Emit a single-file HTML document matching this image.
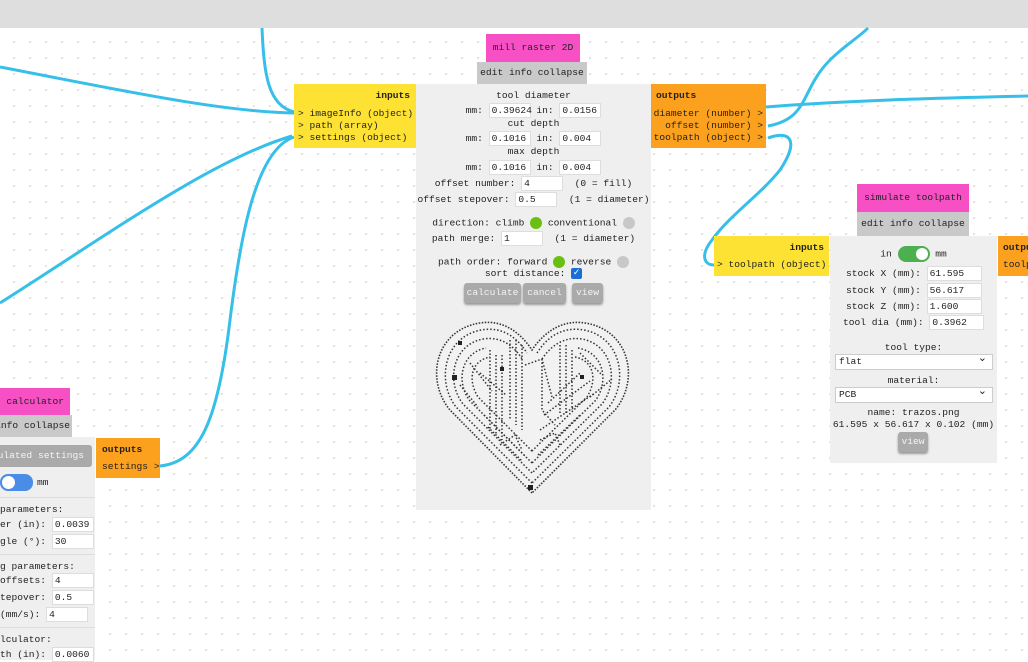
<!DOCTYPE html>
<html><head><meta charset="utf-8"><style>
*{box-sizing:border-box;margin:0;padding:0}
body{width:1028px;height:660px;overflow:hidden;position:relative;background:#fff;font-family:"Liberation Mono",monospace;font-size:9.6px;color:#222;
background-image:radial-gradient(circle,#d4d4d4 0.7px,transparent 1.1px);background-size:16px 16px;background-position:6px 2px}
.a{position:absolute}
.top{left:0;top:0;width:1028px;height:28px;background:#dedede}
.pink{background:#f650c4;text-align:center;white-space:nowrap}
.gray{background:#c9c9c9;text-align:center;white-space:nowrap;overflow:hidden}
.panel{background:#efefef}
.yel{background:#fde234}
.org{background:#fba11d}
.c{position:absolute;text-align:center;white-space:nowrap}
.in{display:inline-block;background:#fff;border:1px solid #ddd;height:15px;line-height:13px;text-align:left;padding-left:2px;vertical-align:middle}
.btn{position:absolute;background:#aaa;color:#f4f4f4;text-align:center;border-radius:3px;line-height:20px;box-shadow:0 2px 2px #999;white-space:nowrap}
.dot{display:inline-block;width:12px;height:12px;border-radius:6px;vertical-align:middle}
.sel{position:absolute;background:#fff;border:1px solid #ccc;height:16px;line-height:14px;padding-left:3px}
.sel:after{content:"⌄";position:absolute;right:5px;top:-3px;font-size:11px}
b{font-weight:bold}
</style></head><body>
<div class="a top"></div>
<svg class="a" style="left:0;top:0" width="1028" height="660">
<g fill="none" stroke="#35bfe9" stroke-width="3">
<path d="M262,28 C264,75 268,105 294,112"/>
<path d="M0,67 C110,88 220,112 294,113"/>
<path d="M0,303 C100,240 210,160 292,136"/>
<path d="M294,137 C255,150 240,240 230,320 C218,420 200,462 160,466"/>
<path d="M766,107 C850,100 950,98 1028,96"/>
<path d="M768,126 C810,118 800,90 830,60 C845,45 858,38 868,28"/>
<path d="M768,138 C790,130 800,140 780,170 C760,195 730,215 712,240 C700,255 704,265 714,265"/>
</g></svg>

<div class="a pink" style="left:486px;top:34px;width:94px;height:28px;line-height:28px">mill raster 2D</div>
<div class="a gray" style="left:477px;top:62px;width:110px;height:22px;line-height:22px">edit info collapse</div>
<div class="a panel" style="left:416px;top:84px;width:235px;height:426px"></div>
<div class="a yel" style="left:294px;top:84px;width:122px;height:64px">
<div class="c" style="right:6px;top:6px"><b>inputs</b></div>
<div class="a" style="left:4px;top:24px;line-height:12px;white-space:pre">&gt; imageInfo (object)
&gt; path (array)
&gt; settings (object)</div></div>
<div class="a org" style="left:651px;top:84px;width:115px;height:64px">
<div class="a" style="left:5px;top:6px"><b>outputs</b></div>
<div class="a" style="right:3px;top:24px;line-height:12px;white-space:pre;text-align:right">diameter (number) &gt;
offset (number) &gt;
toolpath (object) &gt;</div></div>

<div class="c" style="left:416px;width:235px;top:90px">tool diameter</div>
<div class="c" style="left:416px;width:235px;top:103px">mm: <span class="in" style="width:42px">0.39624</span> in: <span class="in" style="width:42px">0.0156</span></div>
<div class="c" style="left:416px;width:235px;top:118px">cut depth</div>
<div class="c" style="left:416px;width:235px;top:131px">mm: <span class="in" style="width:42px">0.1016</span> in: <span class="in" style="width:42px">0.004</span></div>
<div class="c" style="left:416px;width:235px;top:146px">max depth</div>
<div class="c" style="left:416px;width:235px;top:160px">mm: <span class="in" style="width:42px">0.1016</span> in: <span class="in" style="width:42px">0.004</span></div>
<div class="c" style="left:416px;width:235px;top:176px">offset number: <span class="in" style="width:42px">4</span> &nbsp;(0 = fill)</div>
<div class="c" style="left:416px;width:235px;top:192px">offset stepover: <span class="in" style="width:42px">0.5</span> &nbsp;(1 = diameter)</div>
<div class="c" style="left:416px;width:235px;top:217px">direction: climb <span class="dot" style="background:#6bbf12"></span> conventional <span class="dot" style="background:#c8c8c8"></span></div>
<div class="c" style="left:416px;width:235px;top:231px">path merge: <span class="in" style="width:42px">1</span> &nbsp;(1 = diameter)</div>
<div class="c" style="left:416px;width:235px;top:256px">path order: forward <span class="dot" style="background:#6bbf12"></span> reverse <span class="dot" style="background:#c8c8c8"></span></div>
<div class="c" style="left:416px;width:235px;top:268px">sort distance: <span style="display:inline-block;width:11px;height:11px;background:#1a6fd6;color:#fff;font-size:9px;line-height:11px;border-radius:2px;vertical-align:middle">✓</span></div>
<div class="btn" style="left:464px;top:283px;width:57px">calculate</div>
<div class="btn" style="left:523px;top:283px;width:43px">cancel</div>
<div class="btn" style="left:572px;top:283px;width:31px">view</div>

<svg class="a" style="left:430px;top:315px" width="205" height="185" viewBox="0 0 205 185">
<path d="M102,178 L20,95 C-5,65 5,15 50,8 C75,4 92,20 102,35 C112,20 130,4 155,8 C200,15 210,65 185,95 Z" fill="#f2f2f2" stroke="#333" stroke-width="1.6" stroke-dasharray="1.5 1.5"/>
<g fill="none" stroke="#333" stroke-width="1.5" stroke-dasharray="1.5 2">
<path d="M102,168 L26,92 C6,66 14,22 51,15 C74,11 88,24 97,38 M107,38 C116,24 130,11 154,15 C191,22 199,66 179,92 L102,168"/>
<path d="M102,158 L33,89 C16,67 22,30 53,24 C72,21 85,32 92,44 M112,44 C120,32 133,21 152,24 C183,30 189,67 172,89 L102,158"/>
<path d="M102,148 L40,86 C26,68 30,38 56,33 M148,33 C175,38 179,68 165,86 L102,148"/>
<path d="M102,136 L48,82 C38,66 40,46 60,42 M145,42 C165,46 167,66 157,82 L102,136"/>
<path d="M80,25 V105 M86,25 V110 M92,30 V115 M130,30 V100 M136,30 V100 M142,35 V95 M60,35 V115 M66,40 V120 M72,40 V125"/>
<path d="M118,88 L150,58 M114,100 L160,66 M110,115 L165,78 M50,58 L76,80 M54,100 L96,142 M58,112 L92,146 M108,140 L150,100 M95,50 L112,44 L122,82 M40,48 L62,76 M150,38 L172,60 M30,70 L48,92 M160,82 L182,64 M112,44 V95 L125,110 M70,130 L85,120 L92,135 M110,125 L125,118 L130,130"/>
</g>
<g fill="#222"><rect x="98" y="170" width="5" height="5"/><rect x="22" y="60" width="5" height="5"/><rect x="28" y="26" width="4" height="4"/><rect x="150" y="60" width="4" height="4"/><rect x="70" y="52" width="4" height="4"/></g>
</svg>

<div class="a pink" style="left:857px;top:184px;width:112px;height:28px;line-height:28px">simulate toolpath</div>
<div class="a gray" style="left:857px;top:212px;width:112px;height:24px;line-height:24px">edit info collapse</div>
<div class="a panel" style="left:830px;top:236px;width:167px;height:227px"></div>
<div class="a yel" style="left:714px;top:236px;width:115px;height:40px">
<div class="a" style="right:5px;top:6px"><b>inputs</b></div>
<div class="a" style="left:3px;top:23px">&gt; toolpath (object)</div></div>
<div class="a org" style="left:998px;top:236px;width:30px;height:40px;overflow:hidden">
<div class="a" style="left:5px;top:6px;white-space:nowrap"><b>outputs</b></div>
<div class="a" style="left:5px;top:23px;white-space:nowrap">toolpath</div></div>
<div class="c" style="left:830px;width:167px;top:246px">in <span style="display:inline-block;width:32px;height:16px;border-radius:8px;background:#4caf50;vertical-align:middle;position:relative"><span style="position:absolute;right:2px;top:2px;width:12px;height:12px;border-radius:6px;background:#fff"></span></span> mm</div>
<div class="c" style="left:846px;top:266px">stock X (mm): <span class="in" style="width:55px">61.595</span></div>
<div class="c" style="left:846px;top:283px">stock Y (mm): <span class="in" style="width:55px">56.617</span></div>
<div class="c" style="left:846px;top:299px">stock Z (mm): <span class="in" style="width:55px">1.600</span></div>
<div class="c" style="left:843px;top:315px">tool dia (mm): <span class="in" style="width:55px">0.3962</span></div>
<div class="c" style="left:830px;width:167px;top:342px">tool type:</div>
<div class="sel" style="left:835px;top:354px;width:158px">flat</div>
<div class="c" style="left:830px;width:167px;top:375px">material:</div>
<div class="sel" style="left:835px;top:387px;width:158px">PCB</div>
<div class="c" style="left:830px;width:167px;top:407px">name: trazos.png</div>
<div class="c" style="left:830px;width:167px;top:419px">61.595 x 56.617 x 0.102 (mm)</div>
<div class="btn" style="left:898px;top:432px;width:30px">view</div>

<div class="a pink" style="left:0;top:388px;width:70px;height:27px;line-height:27px;text-align:right;padding-right:6px">calculator</div>
<div class="a" style="left:0;top:415px;width:72px;height:22px;background:#c9c9c9"></div>
<div class="a" style="right:958px;top:415px;height:22px;line-height:22px;white-space:nowrap">info collapse</div>
<div class="a panel" style="left:0;top:437px;width:95px;height:223px"></div>
<div class="a org" style="left:96px;top:438px;width:64px;height:40px">
<div class="a" style="left:6px;top:6px"><b>outputs</b></div>
<div class="a" style="left:6px;top:23px;white-space:nowrap">settings &gt;</div></div>
<div class="a" style="left:0;top:445px;width:92px;height:22px;background:#aaa;border-radius:0 3px 3px 0"></div>
<div class="a" style="right:944px;top:445px;line-height:22px;color:#f4f4f4;white-space:nowrap">ulated settings</div>
<div class="a" style="left:0;top:474px;width:33px;height:17px;border-radius:8px;background:#4a8de6"><span class="a" style="left:2px;top:2px;width:13px;height:13px;border-radius:7px;background:#fff"></span></div>
<div class="a" style="left:37px;top:477px">mm</div>
<div class="a" style="left:0;top:497px;width:95px;border-top:1px solid #ddd"></div>
<div class="a" style="left:0;top:504px;white-space:nowrap"> parameters:</div>
<div class="a" style="left:0;top:517px;white-space:nowrap">er (in): <span class="in" style="width:42px">0.0039</span></div>
<div class="a" style="left:0;top:534px;white-space:nowrap">gle (°): <span class="in" style="width:42px">30</span></div>
<div class="a" style="left:0;top:554px;width:95px;border-top:1px solid #ddd"></div>
<div class="a" style="left:0;top:561px;white-space:nowrap">g parameters:</div>
<div class="a" style="left:0;top:573px;white-space:nowrap">offsets: <span class="in" style="width:42px">4</span></div>
<div class="a" style="left:0;top:590px;white-space:nowrap">tepover: <span class="in" style="width:42px">0.5</span></div>
<div class="a" style="left:0;top:607px;white-space:nowrap"> (mm/s): <span class="in" style="width:42px">4</span></div>
<div class="a" style="left:0;top:627px;width:95px;border-top:1px solid #ddd"></div>
<div class="a" style="left:0;top:634px;white-space:nowrap">lculator:</div>
<div class="a" style="left:0;top:647px;white-space:nowrap">th (in): <span class="in" style="width:42px">0.0060</span></div>
</body></html>
